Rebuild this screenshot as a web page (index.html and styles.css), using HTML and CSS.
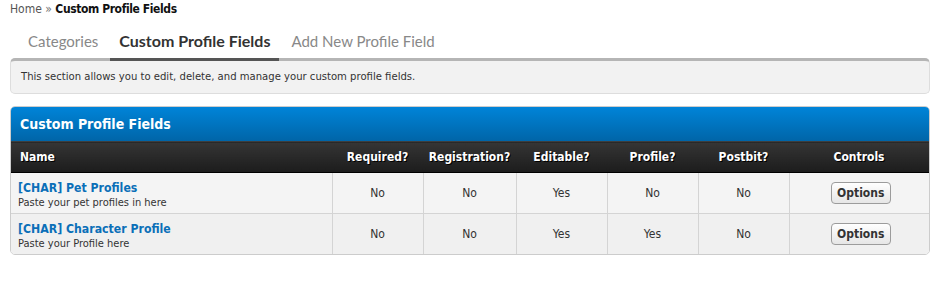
FILE: index.html
```html
<!DOCTYPE html>
<html lang="en">
<head>
    <meta charset="UTF-8">
    <title>Custom Profile Fields</title>
    <link rel="stylesheet" href="styles.css">
</head>
<body>
    <div class="breadcrumb">
        <a href="#" class="crumb">Home</a> &raquo; <span class="current">Custom Profile Fields</span>
    </div>

    <div class="tabs">
        <a href="#" class="tab">Categories</a>
        <a href="#" class="tab active">Custom Profile Fields</a>
        <a href="#" class="tab">Add New Profile Field</a>
    </div>

    <div class="notice">This section allows you to edit, delete, and manage your custom profile fields.</div>

    <div class="panel">
        <div class="panel-head">Custom Profile Fields</div>
        <table class="fields">
            <colgroup>
                <col class="col-name">
                <col class="col-flag">
                <col class="col-flag wide">
                <col class="col-flag">
                <col class="col-flag">
                <col class="col-flag">
                <col>
            </colgroup>
            <thead>
                <tr>
                    <th class="left">Name</th>
                    <th>Required?</th>
                    <th>Registration?</th>
                    <th>Editable?</th>
                    <th>Profile?</th>
                    <th>Postbit?</th>
                    <th>Controls</th>
                </tr>
            </thead>
            <tbody>
                <tr>
                    <td class="left">
                        <a href="#" class="field-name">[CHAR] Pet Profiles</a>
                        <div class="field-desc">Paste your pet profiles in here</div>
                    </td>
                    <td>No</td>
                    <td>No</td>
                    <td>Yes</td>
                    <td>No</td>
                    <td>No</td>
                    <td><button class="options">Options</button></td>
                </tr>
                <tr class="alt">
                    <td class="left">
                        <a href="#" class="field-name">[CHAR] Character Profile</a>
                        <div class="field-desc">Paste your Profile here</div>
                    </td>
                    <td>No</td>
                    <td>No</td>
                    <td>Yes</td>
                    <td>Yes</td>
                    <td>No</td>
                    <td><button class="options">Options</button></td>
                </tr>
            </tbody>
        </table>
    </div>
</body>
</html>
```

FILE: styles.css
```css
body {
    margin: 0;
    padding: 2px 12px 0 10px;
    font-family: "DejaVu Sans Condensed", "DejaVu Sans", sans-serif;
    font-size: 11px;
    color: #333;
    background: #fff;
}
a {
    text-decoration: none;
}
.breadcrumb {
    font-size: 12px;
    line-height: 15px;
    color: #777;
}
.breadcrumb .crumb {
    color: #555;
}
.breadcrumb .current {
    color: #111;
    font-weight: bold;
    letter-spacing: -0.4px;
}
.tabs {
    display: flex;
    gap: 3px;
    margin: 11px 0 -3px 9px;
}
.tab {
    position: relative;
    font-family: Lato, "Open Sans", sans-serif;
    font-size: 15px;
    line-height: 20px;
    padding: 3px 9px 7px 9px;
    border-bottom: 3px solid transparent;
    color: #888;
}
.tab.active {
    color: #333;
    font-size: 16px;
    font-weight: bold;
    border-bottom-color: #555;
}
.notice {
    background: #f2f2f2;
    border: 1px solid #ddd;
    border-top: 3px solid #b5b5b5;
    border-radius: 5px;
    padding: 9px 10px 9px 10px;
    line-height: 14px;
    font-size: 11.2px;
}
.panel {
    margin-top: 12px;
    border: 1px solid #ccc;
    border-radius: 5px;
    overflow: hidden;
}
.panel-head {
    background: linear-gradient(#0084d8, #0065a8);
    color: #fff;
    font-size: 14px;
    font-weight: bold;
    line-height: 34px;
    padding-left: 9px;
}
.fields {
    width: 100%;
    border-collapse: collapse;
    table-layout: fixed;
}
.col-name {
    width: 321px;
}
.col-flag {
    width: 91px;
}
.col-flag.wide {
    width: 93px;
}
.fields th {
    background: linear-gradient(#353535, #1c1c1c);
    border-top: 1px solid #3e3e3e;
    border-bottom: 1px solid #000;
    color: #fff;
    font-size: 12px;
    font-weight: bold;
    text-shadow: 1px 1px 0 #000;
    height: 30px;
    padding: 0;
    text-align: center;
}
.fields th.left {
    text-align: left;
    padding-left: 9px;
}
.fields td {
    background: #f4f4f4;
    border-left: 1px solid #d4d4d4;
    border-bottom: 1px solid #d4d4d4;
    height: 40px;
    padding: 0;
    text-align: center;
    font-size: 12px;
    color: #333;
}
.fields tr.alt td {
    background: #f0f0f0;
    border-bottom: none;
}
.fields td.left {
    border-left: none;
    text-align: left;
    height: 37px;
    padding: 3px 0 0 7px;
}
.field-name {
    color: #0b6fb8;
    font-weight: bold;
    font-size: 12.2px;
    line-height: 15px;
}
.field-desc {
    font-size: 11px;
    line-height: 13px;
    color: #333;
}
.options {
    font-family: inherit;
    font-size: 12px;
    font-weight: bold;
    color: #333;
    background: linear-gradient(#fff, #e6e6e6);
    border: 1px solid #9c9c9c;
    border-radius: 4px;
    width: 60px;
    height: 22px;
    padding: 0;
    margin-left: 3px;
}
```
